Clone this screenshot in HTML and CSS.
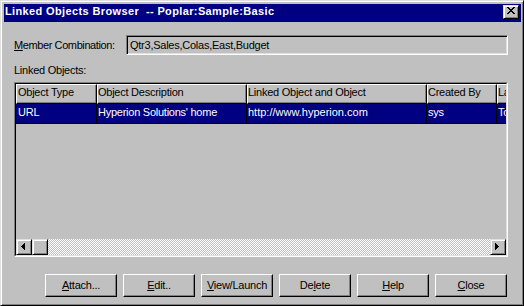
FILE: index.html
```html
<!DOCTYPE html>
<html>
<head>
<meta charset="utf-8">
<title>Linked Objects Browser</title>
<link rel="stylesheet" href="styles.css">
</head>
<body>
<div class="window">
  <div class="titlebar">
    <span class="title">Linked Objects Browser  -- Poplar:Sample:Basic</span>
    <div class="close-btn">
      <svg width="8" height="7" viewBox="0 0 8 7" shape-rendering="crispEdges"><path fill="#000" d="M0 0h2v1H0zM6 0h2v1H6zM1 1h2v1H1zM5 1h2v1H5zM2 2h4v1H2zM3 3h2v1H3zM2 4h4v1H2zM1 5h2v1H1zM5 5h2v1H5zM0 6h2v1H0zM6 6h2v1H6z"/></svg>
    </div>
  </div>
  <div class="content">
    <div class="member-row">
      <span class="label member-label"><u>M</u>ember Combination:</span>
      <div class="field">Qtr3,Sales,Colas,East,Budget</div>
    </div>
    <div class="label linked-label">Linked Objects:</div>
    <div class="list">
      <div class="list-inner">
        <div class="list-header">
          <div class="hcell c1">Object Type</div>
          <div class="hcell c2">Object Description</div>
          <div class="hcell c3">Linked Object and Object</div>
          <div class="hcell c4">Created By</div>
          <div class="hcell c5">Last Modified</div>
        </div>
        <div class="list-row">
          <div class="cell c1">URL</div>
          <div class="cell c2">Hyperion Solutions' home</div>
          <div class="cell c3 url">http://www.hyperion.com</div>
          <div class="cell c4">sys</div>
          <div class="cell c5">Today</div>
        </div>
        <div class="list-spacer"></div>
        <div class="hscroll">
          <div class="sb-btn">
            <svg width="4" height="7" viewBox="0 0 4 7" shape-rendering="crispEdges"><path fill="#000" d="M0 3h1v1H0zM1 2h1v3H1zM2 1h1v5H2zM3 0h1v7H3z"/></svg>
          </div>
          <div class="sb-thumb"></div>
          <div class="sb-track"></div>
          <div class="sb-btn">
            <svg width="4" height="7" viewBox="0 0 4 7" shape-rendering="crispEdges"><path fill="#000" d="M0 0h1v7H0zM1 1h1v5H1zM2 2h1v3H2zM3 3h1v1H3z"/></svg>
          </div>
        </div>
      </div>
    </div>
    <div class="buttons">
      <button class="btn"><span><u>A</u>ttach...</span></button>
      <button class="btn"><span><u>E</u>dit..</span></button>
      <button class="btn"><span><u>V</u>iew/Launch</span></button>
      <button class="btn"><span>De<u>l</u>ete</span></button>
      <button class="btn"><span><u>H</u>elp</span></button>
      <button class="btn"><span><u>C</u>lose</span></button>
    </div>
  </div>
</div>
</body>
</html>
```

FILE: styles.css
```css
* {
  box-sizing: border-box;
}

html,
body {
  margin: 0;
  padding: 0;
}

body {
  background: #c0c0c0;
  font-family: "Liberation Sans", Arial, sans-serif;
  font-size: 11px;
  letter-spacing: -0.25px;
  color: #000;
}

.window {
  width: 524px;
  height: 306px;
  border: 1px solid;
  border-color: #dfdfdf #000 #000 #dfdfdf;
  box-shadow: inset 1px 1px #fff, inset -1px -1px #808080;
  padding: 3px 2px 3px 3px;
  display: flex;
  flex-direction: column;
}

.titlebar {
  height: 18px;
  flex-shrink: 0;
  background: #000080;
  display: flex;
  align-items: flex-start;
  padding-left: 1px;
}

.title {
  flex: 1;
  color: #fff;
  font-weight: bold;
  line-height: 15px;
  letter-spacing: 0.37px;
  white-space: pre;
}

.close-btn {
  width: 16px;
  height: 14px;
  margin: 1px 2px 0 0;
  background: #c0c0c0;
  border: 1px solid;
  border-color: #dfdfdf #000 #000 #dfdfdf;
  box-shadow: inset 1px 1px #fff, inset -1px -1px #808080;
  padding: 1px 0 0 3px;
}

.close-btn svg,
.sb-btn svg {
  display: block;
}

.content {
  flex: 1;
  display: flex;
  flex-direction: column;
  padding: 13px 13px 0 10px;
}

.member-row {
  display: flex;
  align-items: center;
}

.label {
  line-height: 13px;
  white-space: nowrap;
}

.member-label {
  width: 112px;
  flex-shrink: 0;
  letter-spacing: -0.4px;
}

.field {
  flex: 1;
  height: 20px;
  border: 1px solid;
  border-color: #808080 #fff #fff #808080;
  box-shadow: inset 1px 1px #000, inset -1px -1px #dfdfdf;
  padding: 0 3px;
  line-height: 18px;
  white-space: nowrap;
  overflow: hidden;
}

.linked-label {
  margin-top: 9px;
}

.list {
  margin-top: 5px;
  height: 175px;
  border: 1px solid;
  border-color: #808080 #fff #fff #808080;
}

.list-inner {
  height: 100%;
  border: 1px solid;
  border-color: #000 #dfdfdf #dfdfdf #000;
  display: flex;
  flex-direction: column;
  overflow: hidden;
}

.list-header,
.list-row {
  display: flex;
  flex-shrink: 0;
  white-space: nowrap;
}

.hcell {
  height: 20px;
  flex-shrink: 0;
  border: 1px solid;
  border-color: #fff #000 #000 #fff;
  box-shadow: inset -1px -1px #808080;
  line-height: 15px;
  padding-left: 0;
  overflow: hidden;
}

.cell {
  height: 20px;
  flex-shrink: 0;
  background: #000080;
  color: #fff;
  border-right: 1px solid #000;
  border-bottom: 1px solid #000;
  line-height: 16px;
  padding-left: 1px;
  overflow: hidden;
}

.c1 { width: 81px; }
.c2 { width: 150px; }
.c3 { width: 180px; }
.c4 { width: 70px; }
.c5 { width: 100px; }

.hcell.c1 { padding-left: 1px; }
.cell.c1 { padding-left: 2px; }

.url {
  letter-spacing: 0;
}

.list-spacer {
  flex: 1;
}

.hscroll {
  height: 16px;
  flex-shrink: 0;
  display: flex;
}

.sb-btn,
.sb-thumb {
  width: 16px;
  height: 16px;
  flex-shrink: 0;
  background: #c0c0c0;
  border: 1px solid;
  border-color: #dfdfdf #000 #000 #dfdfdf;
  box-shadow: inset 1px 1px #fff, inset -1px -1px #808080;
}

.sb-btn {
  padding: 3px 0 0 4px;
}

.sb-track {
  flex: 1;
  background: repeating-conic-gradient(#fff 0 25%, #c0c0c0 0 50%) 0 0 / 2px 2px;
}

.buttons {
  display: flex;
  gap: 6px;
  margin-top: 17px;
  padding-left: 31px;
}

.btn {
  width: 72px;
  height: 23px;
  flex-shrink: 0;
  background: #c0c0c0;
  border: 1px solid;
  border-color: #fff #000 #000 #fff;
  box-shadow: inset -1px -1px #808080;
  padding: 0;
  margin: 0;
  font-family: "Liberation Sans", Arial, sans-serif;
  font-size: 11px;
  letter-spacing: -0.25px;
  line-height: 13px;
  color: #000;
  display: flex;
  align-items: center;
  justify-content: center;
}
```
